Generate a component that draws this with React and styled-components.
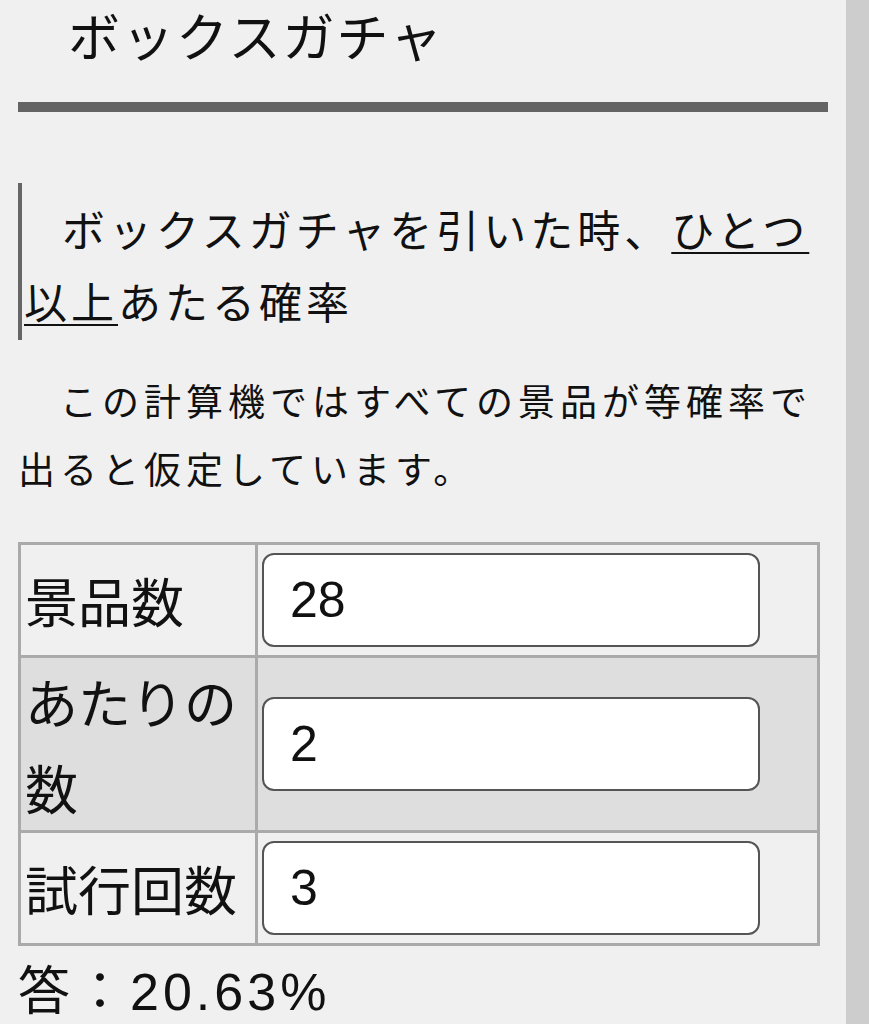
import React, {useState} from 'react'
import styled, {createGlobalStyle} from 'styled-components'

const GlobalStyle = createGlobalStyle`
  body {
    margin: 0;
    background: #f0f0f0;
    color: #111;
    font-family: "Noto Sans CJK JP", "Noto Sans", sans-serif;
  }
`

const rows = [
  {label: '景品数', value: '28'},
  {label: 'あたりの数', value: '2', shaded: true},
  {label: '試行回数', value: '3'},
]

function boxGacha(total, hits, tries) {
  // probability that at least one hit comes out in `tries` draws without replacement
  let miss = 1
  for (let i = 0; i < tries; i++) {
    miss *= (total - hits - i) / (total - i)
  }
  return (1 - miss) * 100
}

function App() {
  const [values, setValues] = useState(rows.map(r => r.value))
  const [total, hits, tries] = values.map(Number)
  const answer = boxGacha(total, hits, tries)

  return (
    <Page>
      <GlobalStyle />
      <Main>
        <Title>ボックスガチャ</Title>
        <Rule />
        <Heading>
          ボックスガチャを引いた時、<U>ひとつ以上</U>あたる確率
        </Heading>
        <Lead>　この計算機ではすべての景品が等確率で出ると仮定しています。</Lead>
        <Table>
          <tbody>
            {rows.map((r, i) => (
              <Row key={r.label} shaded={r.shaded}>
                <Label>{r.label}</Label>
                <Cell>
                  <Input
                    value={values[i]}
                    onChange={e => {
                      const next = [...values]
                      next[i] = e.target.value
                      setValues(next)
                    }}
                  />
                </Cell>
              </Row>
            ))}
          </tbody>
        </Table>
        <Answer>答：{isFinite(answer) ? answer.toFixed(2) : '--'}%</Answer>
      </Main>
      <Scroll />
    </Page>
  )
}

const Page = styled.div`
  display: flex;
  min-height: 1024px;
`

const Main = styled.main`
  flex: 1;
  padding: 0 18px;
  overflow: hidden;
`

const Scroll = styled.div`
  width: 23px;
  background: #cdcdcd;
`

const Title = styled.h1`
  margin: 0;
  padding-left: 50px;
  font-size: 52px;
  font-weight: normal;
  line-height: 70px;
  letter-spacing: 2px;
`

const Rule = styled.hr`
  margin: 32px 0 0;
  height: 10px;
  border: none;
  background: #646464;
`

const Heading = styled.h2`
  margin: 71px 0 0;
  padding: 9px 0 4px 2px;
  border-left: 4px solid #666;
  font-size: 43px;
  font-weight: normal;
  line-height: 72px;
  letter-spacing: 4px;
  text-indent: 38px;
`

const U = styled.span`
  text-decoration: underline;
  text-decoration-thickness: 2px;
  text-underline-offset: 5px;
`

const Lead = styled.p`
  margin: 26px 0 0;
  font-size: 37px;
  line-height: 68px;
  letter-spacing: 5px;
`

const Table = styled.table`
  margin-top: 40px;
  width: 802px;
  border-collapse: collapse;
  border: 3px solid #aaa;
`

const Row = styled.tr`
  background: ${p => (p.shaded ? '#dedede' : '#f0f0f0')};
`

const Label = styled.td`
  width: 228px;
  padding: 0 2px 0 4px;
  border: 3px solid #aaa;
  font-size: 53px;
  line-height: 86px;
  vertical-align: middle;
`

const Cell = styled.td`
  padding: 8px 4px;
  border: 3px solid #aaa;
  vertical-align: middle;
`

const Input = styled.input`
  display: block;
  box-sizing: border-box;
  width: 498px;
  height: 94px;
  padding: 0 0 0 26px;
  border: 2px solid #555;
  border-radius: 12px;
  background: #fff;
  color: #111;
  font-family: "Liberation Sans", Arial, sans-serif;
  font-size: 50px;
  outline: none;
`

const Answer = styled.div`
  font-family: "Liberation Sans", "Noto Sans CJK JP", sans-serif;
  font-size: 52px;
  line-height: 92px;
  letter-spacing: 4px;
`

export default App
